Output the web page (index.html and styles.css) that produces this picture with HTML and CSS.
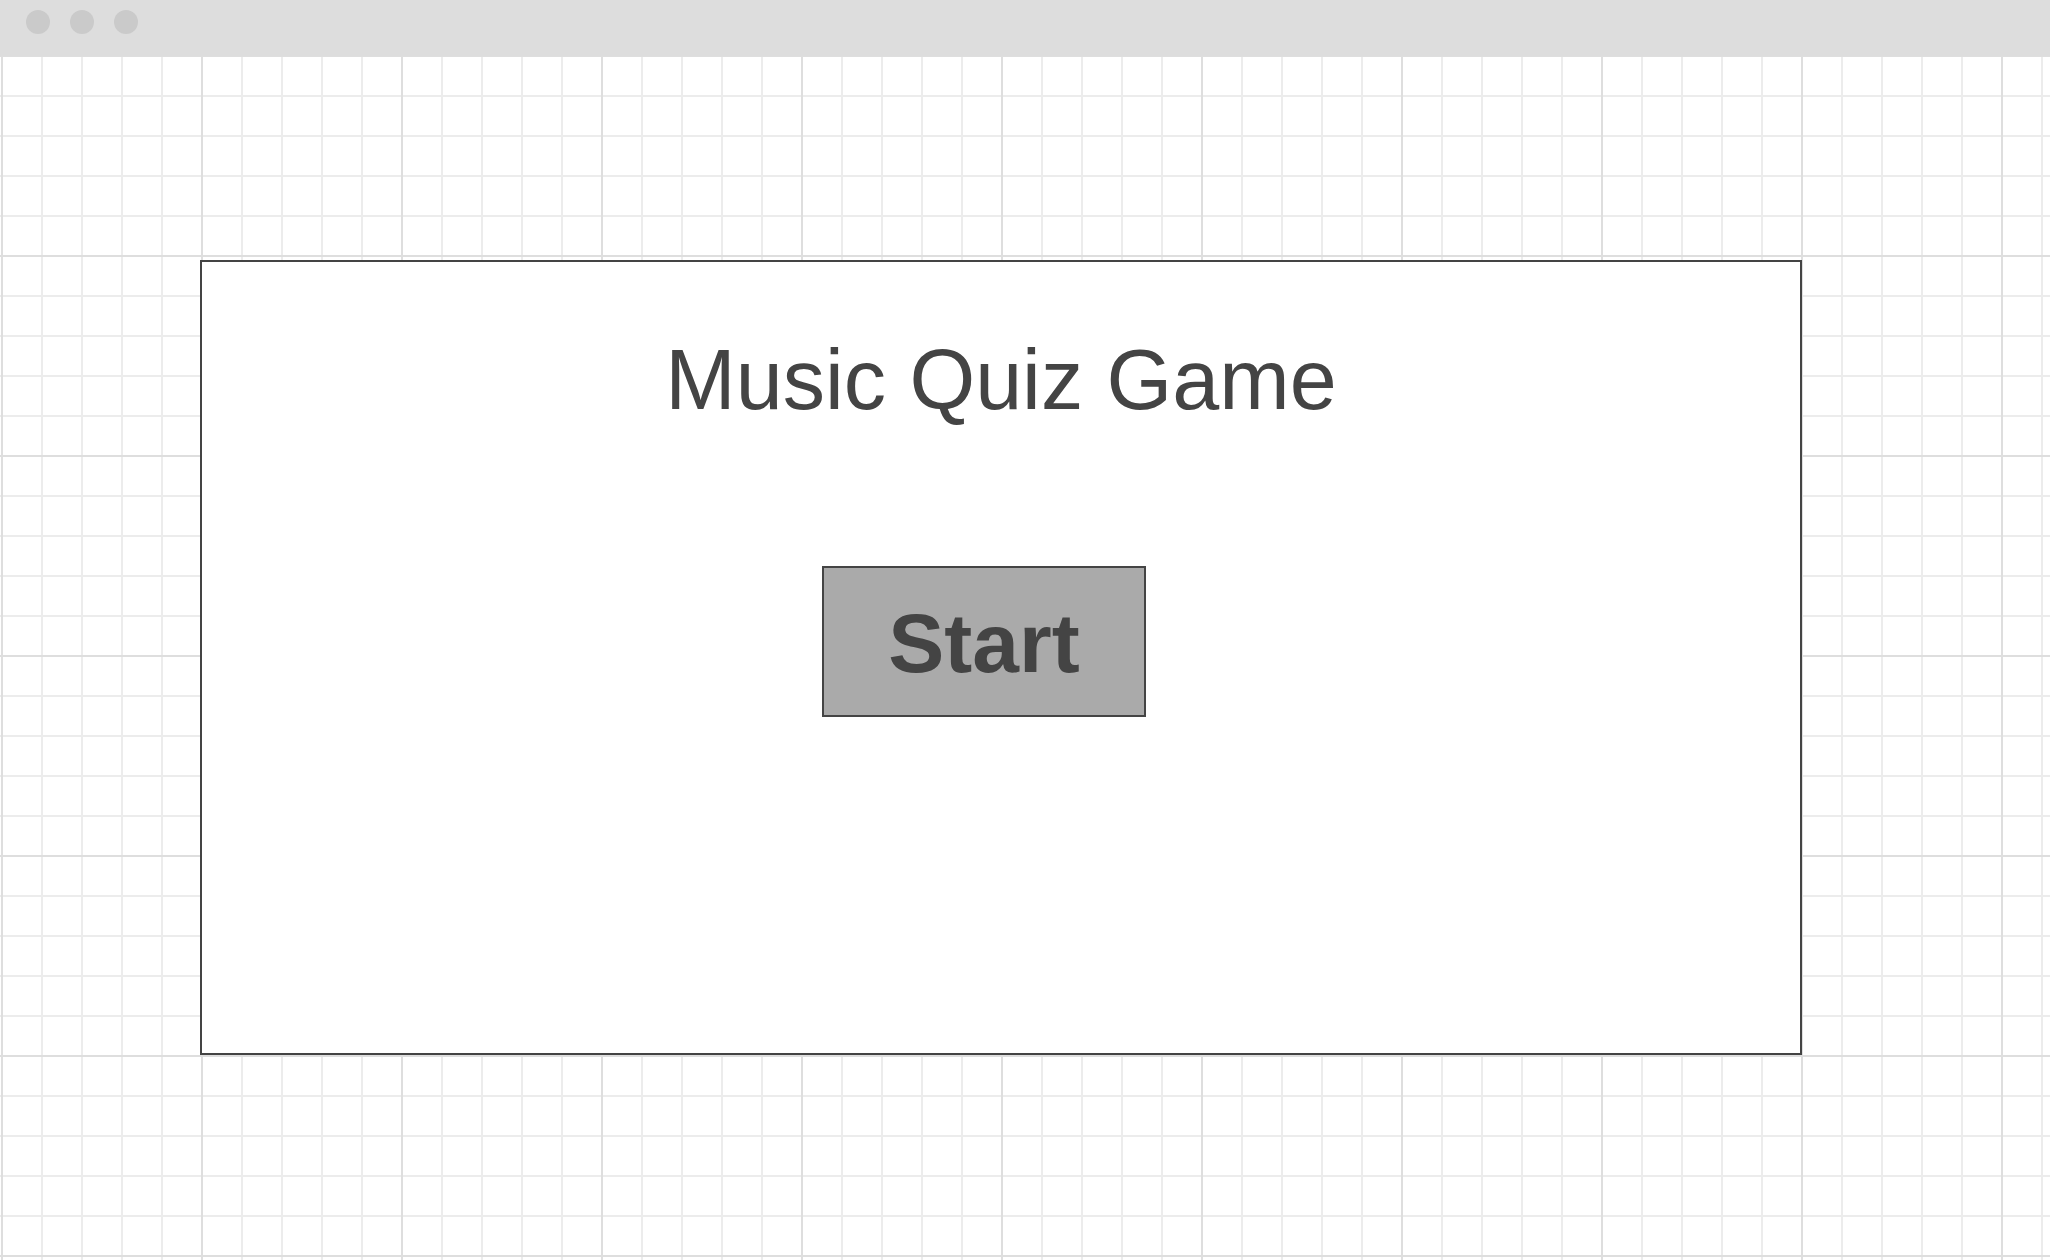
FILE: index.html
```html
<!DOCTYPE html>
<html>
<head>
<meta charset="utf-8">
<title>Music Quiz Game</title>
<link rel="stylesheet" href="styles.css">
</head>
<body>
<div class="titlebar">
  <span class="dot"></span>
  <span class="dot"></span>
  <span class="dot"></span>
</div>
<div class="canvas">
  <div class="frame">
    <h1 class="title">Music Quiz Game</h1>
    <div class="start-btn">Start</div>
  </div>
</div>
</body>
</html>
```
FILE: styles.css
```css
html, body {
  margin: 0;
  padding: 0;
}
body {
  width: 2050px;
  height: 1260px;
  overflow: hidden;
  font-family: "Liberation Sans", Arial, sans-serif;
  background: #ffffff;
}
.titlebar {
  height: 56px;
  background: #dddddd;
  display: flex;
  align-items: flex-start;
  gap: 20px;
  padding: 10px 0 0 26px;
  box-sizing: border-box;
}
.dot {
  width: 24px;
  height: 24px;
  border-radius: 50%;
  background: #cacaca;
}
.canvas {
  height: 1204px;
  box-sizing: border-box;
  padding: 204px 0 0 200px;
  background-color: #ffffff;
  background-image:
    linear-gradient(to right, #dedede 0, #dedede 2px, transparent 2px),
    linear-gradient(to bottom, #dedede 0, #dedede 2px, transparent 2px),
    linear-gradient(to right, #ececec 0, #ececec 2px, transparent 2px),
    linear-gradient(to bottom, #ececec 0, #ececec 2px, transparent 2px);
  background-size: 200px 200px, 200px 200px, 40px 40px, 40px 40px;
  background-position: 1px -1px, 1px -1px, 1px -1px, 1px -1px;
}
.frame {
  width: 1602px;
  height: 795px;
  box-sizing: border-box;
  border: 2px solid #444444;
  background: #ffffff;
  display: flex;
  flex-direction: column;
  align-items: flex-start;
}
.title {
  align-self: stretch;
  margin: 68px 0 0 0;
  font-size: 84.5px;
  line-height: 100px;
  font-weight: normal;
  color: #444444;
  text-align: center;
}
.start-btn {
  margin: 136px 0 0 620px;
  width: 324px;
  height: 151px;
  box-sizing: border-box;
  border: 2px solid #444444;
  background: #aaaaaa;
  color: #444444;
  font-size: 84px;
  font-weight: bold;
  display: flex;
  align-items: center;
  justify-content: center;
  padding-top: 3px;
}
```
